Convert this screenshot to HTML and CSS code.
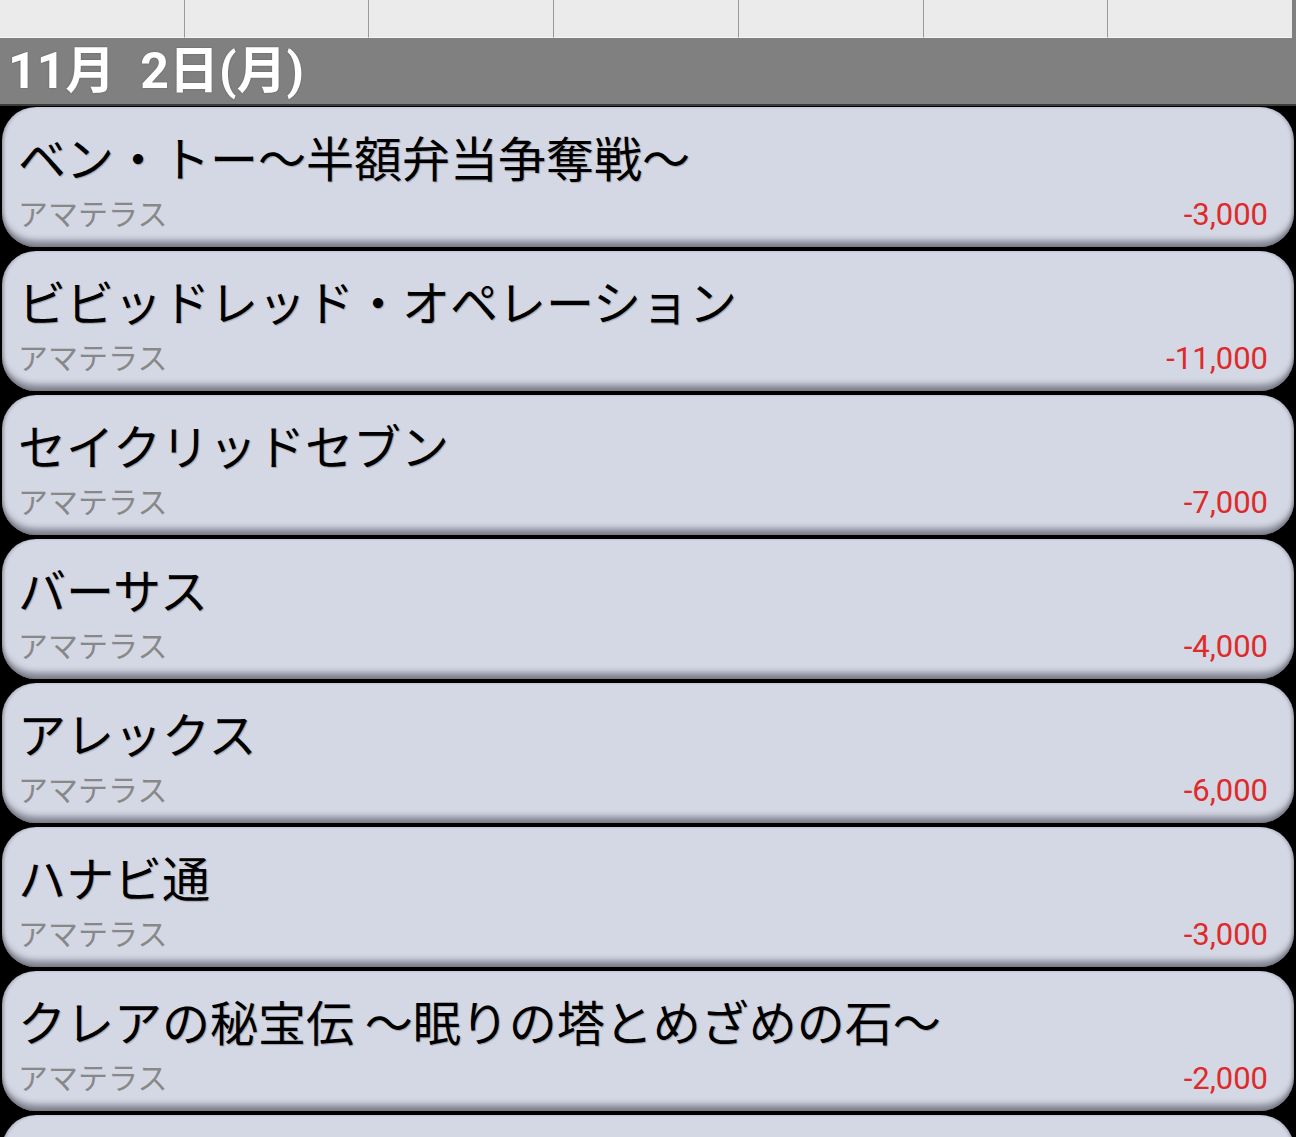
FILE: index.html
```html
<!DOCTYPE html>
<html lang="ja">
<head>
    <meta charset="UTF-8">
    <title>支出リスト</title>
    <link rel="stylesheet" href="styles.css">
</head>
<body>

    <div class="tabs">
        <div class="tab"></div>
        <div class="tab"></div>
        <div class="tab"></div>
        <div class="tab"></div>
        <div class="tab"></div>
        <div class="tab"></div>
        <div class="tab"></div>
    </div>

    <div class="day_header">11月&nbsp;&nbsp;2日(月)</div>

    <div class="list">
        <div class="item">
            <div class="item_title">ベン・トー～半額弁当争奪戦～</div>
            <div class="item_row">
                <span class="item_shop">アマテラス</span>
                <span class="item_price">-3,000</span>
            </div>
        </div>
        <div class="item">
            <div class="item_title">ビビッドレッド・オペレーション</div>
            <div class="item_row">
                <span class="item_shop">アマテラス</span>
                <span class="item_price">-11,000</span>
            </div>
        </div>
        <div class="item">
            <div class="item_title">セイクリッドセブン</div>
            <div class="item_row">
                <span class="item_shop">アマテラス</span>
                <span class="item_price">-7,000</span>
            </div>
        </div>
        <div class="item">
            <div class="item_title">バーサス</div>
            <div class="item_row">
                <span class="item_shop">アマテラス</span>
                <span class="item_price">-4,000</span>
            </div>
        </div>
        <div class="item">
            <div class="item_title">アレックス</div>
            <div class="item_row">
                <span class="item_shop">アマテラス</span>
                <span class="item_price">-6,000</span>
            </div>
        </div>
        <div class="item">
            <div class="item_title">ハナビ通</div>
            <div class="item_row">
                <span class="item_shop">アマテラス</span>
                <span class="item_price">-3,000</span>
            </div>
        </div>
        <div class="item">
            <div class="item_title">クレアの秘宝伝 ～眠りの塔とめざめの石～</div>
            <div class="item_row">
                <span class="item_shop">アマテラス</span>
                <span class="item_price">-2,000</span>
            </div>
        </div>
        <!-- next row, cut off by the screen edge -->
        <div class="item"></div>
    </div>

</body>
</html>
```

FILE: styles.css
```css
body {
    margin: 0;
    background: #000;
    font-family: "Noto Sans CJK JP", "Noto Sans", sans-serif;
    height: 1137px;
    overflow: hidden;
}

.tabs {
    display: flex;
    height: 38px;
    background: #808080;
    padding-right: 4px;
}

.tab {
    flex: 1;
    background: #ebebeb;
    border-right: 1px solid #9a9a9a;
    border-bottom: 1px solid #f6f6f6;
}

.tab:last-child {
    border-right: none;
}

.day_header {
    height: 66px;
    background: #808080;
    border-bottom: 2px solid #3a3a3a;
    color: #fff;
    font-family: "Roboto", "Noto Sans CJK JP", sans-serif;
    font-weight: bold;
    font-size: 50px;
    line-height: 66px;
    padding-left: 8px;
    text-shadow: 0 0 2px rgba(0, 0, 0, 0.3);
}

.list {
    display: flex;
    flex-direction: column;
    gap: 4px;
    padding: 1px 2px 0;
}

.item {
    height: 140px;
    flex-shrink: 0;
    box-sizing: border-box;
    background: #d4d8e4;
    border-radius: 34px;
    padding: 15px 26px 0 16px;
    box-shadow:
        inset 0 -9px 6px -3px rgba(70, 70, 80, 0.6),
        inset 3px 0 3px -1px rgba(60, 60, 70, 0.3),
        inset -3px 0 3px -1px rgba(60, 60, 70, 0.3);
}

.item_title {
    font-size: 48px;
    line-height: 68px;
    color: #000;
    white-space: nowrap;
    text-shadow: 1px 1px 1px rgba(0, 0, 0, 0.25);
}

.item_row {
    display: flex;
    justify-content: space-between;
    align-items: baseline;
}

.item_shop {
    font-size: 30px;
    line-height: 44px;
    color: #888;
}

.item_price {
    font-family: "Roboto", sans-serif;
    font-size: 31px;
    line-height: 44px;
    color: #de2a2a;
}
```
